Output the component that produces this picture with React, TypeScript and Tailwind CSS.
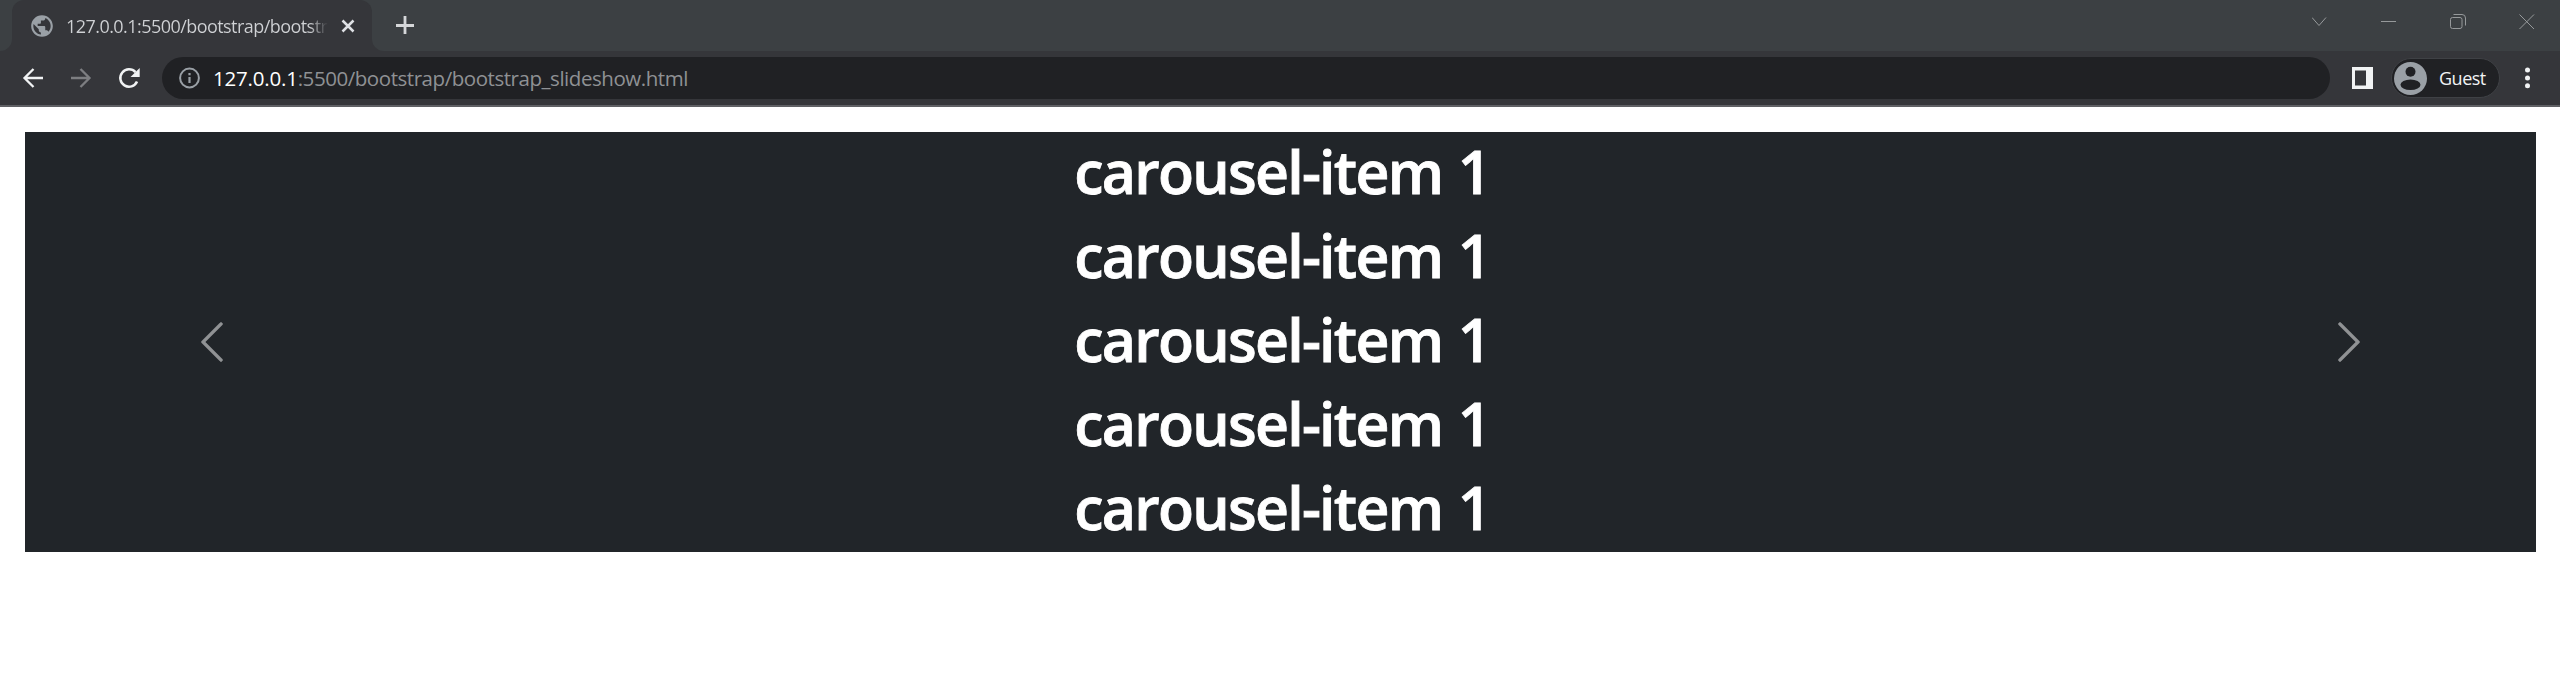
import type { ReactNode } from "react";

const slides = [1, 1, 1, 1, 1];

function IconBox({ className, children, viewBox = "0 0 24 24" }: { className: string; children: ReactNode; viewBox?: string }) {
  return (
    <svg className={`block shrink-0 ${className}`} viewBox={viewBox} fill="none">
      {children}
    </svg>
  );
}

function TabStrip() {
  return (
    <div className="flex h-[51px] items-start justify-between bg-[#3c4043]">
      <div className="flex h-full">
        <IconBox className="h-[51px] w-3" viewBox="0 0 12 51">
          <path d="M0 51A12 12 0 0 0 12 39V51Z" fill="#35363a" />
        </IconBox>
        <div className="flex h-full w-[360px] items-center rounded-t-[12px] bg-[#35363a] pl-[17px]">
          <IconBox className="size-[26px]">
            <path
              fill="#9aa0a6"
              d="M12 2C6.48 2 2 6.48 2 12s4.48 10 10 10 10-4.48 10-10S17.52 2 12 2zm-1 17.93c-3.95-.49-7-3.85-7-7.93 0-.62.08-1.21.21-1.79L9 15v1c0 1.1.9 2 2 2v1.93zm6.9-2.54c-.26-.81-1-1.39-1.9-1.39h-1v-3c0-.55-.45-1-1-1H8v-2h2c.55 0 1-.45 1-1V7h2c1.100 0 2-.9 2-2v-.41c2.930 1.190 5 4.060 5 7.410 0 2.080-.8 3.970-2.100 5.390z"
            />
          </IconBox>
          <div className="ml-[11px] h-7 w-[262px] overflow-hidden whitespace-nowrap bg-linear-to-r from-[#d0d2d5] from-93% to-[#35363a] bg-clip-text text-[18px] leading-7 tracking-[-0.55px] text-transparent">
            127.0.0.1:5500/bootstrap/bootstr
          </div>
          <IconBox className="ml-[12px] size-4" viewBox="0 0 16 16">
            <path d="M2.500 2.500l11 11M13.500 2.500l-11 11" stroke="#dfe1e5" strokeWidth="2.500" />
          </IconBox>
        </div>
        <IconBox className="h-[51px] w-3" viewBox="0 0 12 51">
          <path d="M12 51A12 12 0 0 1 0 39V51Z" fill="#35363a" />
        </IconBox>
        <IconBox className="ml-[12px] mt-[16px] size-[18px]" viewBox="0 0 18 18">
          <path d="M9 0V18M0 9.500H18" stroke="#d5d7d9" strokeWidth="2.800" />
        </IconBox>
      </div>
      <div className="flex gap-[53px] pr-[25px] pt-[13px] text-[#96999b]">
        <IconBox className="size-4" viewBox="0 0 16 16">
          <path d="M0 4.500l7 8 7-8" stroke="currentColor" />
        </IconBox>
        <IconBox className="size-4" viewBox="0 0 16 16">
          <path d="M0 8.500H15" stroke="currentColor" />
        </IconBox>
        <IconBox className="size-4" viewBox="0 0 16 16">
          <rect x=".5" y="4.500" width="11.500" height="11" rx="2" stroke="currentColor" />
          <path d="M3.500 1.500H12Q15.500 1.500 15.500 5V12.500" stroke="currentColor" />
        </IconBox>
        <IconBox className="size-4" viewBox="0 0 16 16">
          <path d="M.5 1.500l14.500 14.500M15 1.500L.5 16" stroke="currentColor" />
        </IconBox>
      </div>
    </div>
  );
}

function Toolbar() {
  return (
    <div className="flex h-[56px] items-center border-b-2 border-[#5f6064] bg-[#35363a] pl-[21px] pr-[30px]">
      <IconBox className="size-6">
        <path d="M22 12H4M12.500 3L3.500 12l9 9" stroke="#f1f3f4" strokeWidth="2.300" />
      </IconBox>
      <IconBox className="ml-6 size-6">
        <path d="M2 12H20M11.500 3l9 9-9 9" stroke="#7d7e81" strokeWidth="2.300" />
      </IconBox>
      <IconBox className="ml-[24px] size-6">
        <path d="M20 15.500A8.700 8.700 0 1 1 18.500 6.200" stroke="#f1f3f4" strokeWidth="2.500" />
        <path d="M22.700 2V11H13.500Z" fill="#f1f3f4" />
      </IconBox>
      <div className="ml-[21px] flex h-[42px] flex-1 items-center rounded-full bg-[#202124] pl-[15px]">
        <IconBox className="size-6">
          <circle cx="12.500" cy="12" r="9.400" stroke="#9aa0a6" strokeWidth="2" />
          <path d="M12.500 11V17M12.500 7V9.200" stroke="#9aa0a6" strokeWidth="2.200" />
        </IconBox>
        <div className="ml-[12px] whitespace-nowrap text-[20.500px] leading-7 tracking-[-0.45px] text-[#8f9194]">
          <span className="tracking-[-0.2px] text-white">127.0.0.1</span>:5500/bootstrap/bootstrap_slideshow.html
        </div>
      </div>
      <IconBox className="ml-[22px] h-[22px] w-[21px]" viewBox="0 0 21 22">
        <path d="M0 0H21V22H0ZM3 3.500V18.500H14V3.500Z" fill="#f1f3f4" fillRule="evenodd" />
      </IconBox>
      <div className="ml-[18px] flex h-10 w-[109px] items-center rounded-full border border-[#3f4145] bg-[#202124] pl-[2px]">
        <IconBox className="size-[33px]" viewBox="0 0 33 33">
          <circle cx="16.500" cy="16.500" r="16.500" fill="#9aa0a6" />
          <circle cx="16.500" cy="9.800" r="5" fill="#202124" />
          <ellipse cx="16.500" cy="22.800" rx="10" ry="5.300" fill="#202124" />
        </IconBox>
        <span className="ml-3 text-[18px] leading-6 tracking-[-0.5px] text-[#f1f3f4]">Guest</span>
      </div>
      <IconBox className="ml-[25px] h-[22px] w-[5px]" viewBox="0 0 5 22">
        <circle cx="2.500" cy="3" r="2.500" fill="#f1f3f4" />
        <circle cx="2.500" cy="11" r="2.500" fill="#f1f3f4" />
        <circle cx="2.500" cy="18.700" r="2.500" fill="#f1f3f4" />
      </IconBox>
    </div>
  );
}

function CarouselControl({ path, label }: { path: string; label: string }) {
  return (
    <button aria-label={label} className="flex w-[374px] items-center justify-center opacity-50">
      <svg className="size-12" viewBox="0 0 16 16" fill="#fff" stroke="#fff" strokeWidth=".2">
        <path d={path} />
      </svg>
    </button>
  );
}

function Carousel() {
  return (
    <div className="ml-[25px] mr-6 mt-[25px] flex h-[420px] justify-between bg-[#212529]">
      <CarouselControl
        label="Previous"
        path="M11.354 1.646a.5.5 0 0 1 0 .708L5.707 8l5.647 5.646a.5.5 0 0 1-.708.708l-6-6a.5.5 0 0 1 0-.708l6-6a.5.5 0 0 1 .708 0z"
      />
      <div className="-mt-[3px] pl-[3px] text-center text-[59px] font-semibold text-white [-webkit-text-stroke:0.8px_white]">
        {slides.map((n, i) => (
          <h1 key={i} className="whitespace-nowrap leading-[84px] tracking-[-1.75px]">
            carousel-item <span className="ml-[2px]">{n}</span>
          </h1>
        ))}
      </div>
      <CarouselControl
        label="Next"
        path="M4.646 1.646a.5.5 0 0 1 .708 0l6 6a.5.5 0 0 1 0 .708l-6 6a.5.5 0 0 1-.708-.708L10.293 8 4.646 2.354a.5.5 0 0 1 0-.708z"
      />
    </div>
  );
}

export default function App() {
  return (
    <div className="flex h-[695px] w-[2560px] flex-col bg-white font-['Open_Sans','Noto_Sans',sans-serif]">
      <TabStrip />
      <Toolbar />
      <Carousel />
    </div>
  );
}
